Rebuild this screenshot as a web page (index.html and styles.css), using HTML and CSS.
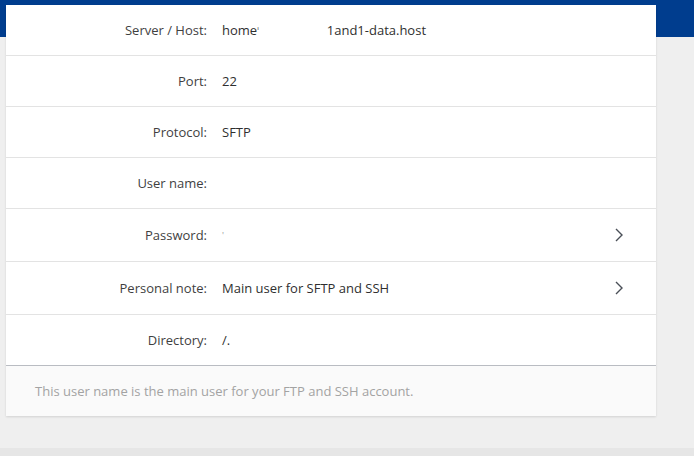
FILE: index.html
```html
<!DOCTYPE html>
<html lang="en">
<head>
<meta charset="utf-8">
<link rel="stylesheet" href="styles.css">
</head>
<body>
<div class="page">
  <div class="card">
    <div class="row r1"><span class="label">Server / Host:</span><span class="value">home<span class="cut">ˈ</span><span class="host">1and1-data.host</span></span></div>
    <div class="row"><span class="label">Port:</span><span class="value">22</span></div>
    <div class="row"><span class="label">Protocol:</span><span class="value">SFTP</span></div>
    <div class="row"><span class="label">User name:</span><span class="value"></span></div>
    <div class="row tall"><span class="label">Password:</span><span class="value pw">'</span>
      <svg class="chev" width="10" height="16" viewBox="0 0 10 16"><polyline points="2,2 8,8 2,14" fill="none" stroke="#4a4f57" stroke-width="1.4"/></svg></div>
    <div class="row tall"><span class="label">Personal note:</span><span class="value">Main user for SFTP and SSH</span>
      <svg class="chev" width="10" height="16" viewBox="0 0 10 16"><polyline points="2,2 8,8 2,14" fill="none" stroke="#4a4f57" stroke-width="1.4"/></svg></div>
    <div class="row last"><span class="label">Directory:</span><span class="value">/.</span></div>
    <div class="foot">This user name is the main user for your FTP and SSH account.</div>
  </div>
  <div class="strip"></div>
</div>
</body>
</html>
```
FILE: styles.css
```css
html, body { margin: 0; padding: 0; }
body {
  width: 694px;
  height: 456px;
  overflow: hidden;
  background: linear-gradient(#003d8e 0, #003d8e 37px, #efefef 37px);
  font-family: "Open Sans", "Noto Sans", sans-serif;
  font-size: 13px;
}
.page {
  display: flex;
  flex-direction: column;
  height: 456px;
  padding-top: 5px;
  box-sizing: border-box;
}
.card {
  margin-left: 6px;
  width: 650px;
  background: #fff;
  box-shadow: 0 1px 2px rgba(0,0,0,0.12);
}
.row {
  display: flex;
  align-items: center;
  height: 50px;
  border-bottom: 1px solid #e3e3e3;
}
.row.tall { height: 52px; }
.row.last { border-bottom: 1px solid #b9bcc2; height: 50px; }
.label {
  width: 201px;
  text-align: right;
  color: #3f3f3f;
  flex: none;
}
.value {
  margin-left: 15px;
  color: #2f2f2f;
  flex: 1;
}
.cut {
  color: #777;
  font-size: 10px;
}
.host { margin-left: 68px; }
.pw { color: #999; font-size: 9px; }
.chev { margin-right: 32px; flex: none; }
.foot {
  height: 50px;
  background: #fafafa;
  color: #a3a3a3;
  padding-left: 29px;
  display: flex;
  align-items: center;
}
.strip {
  margin-top: auto;
  height: 8px;
  background: #e6e6e6;
}
```
